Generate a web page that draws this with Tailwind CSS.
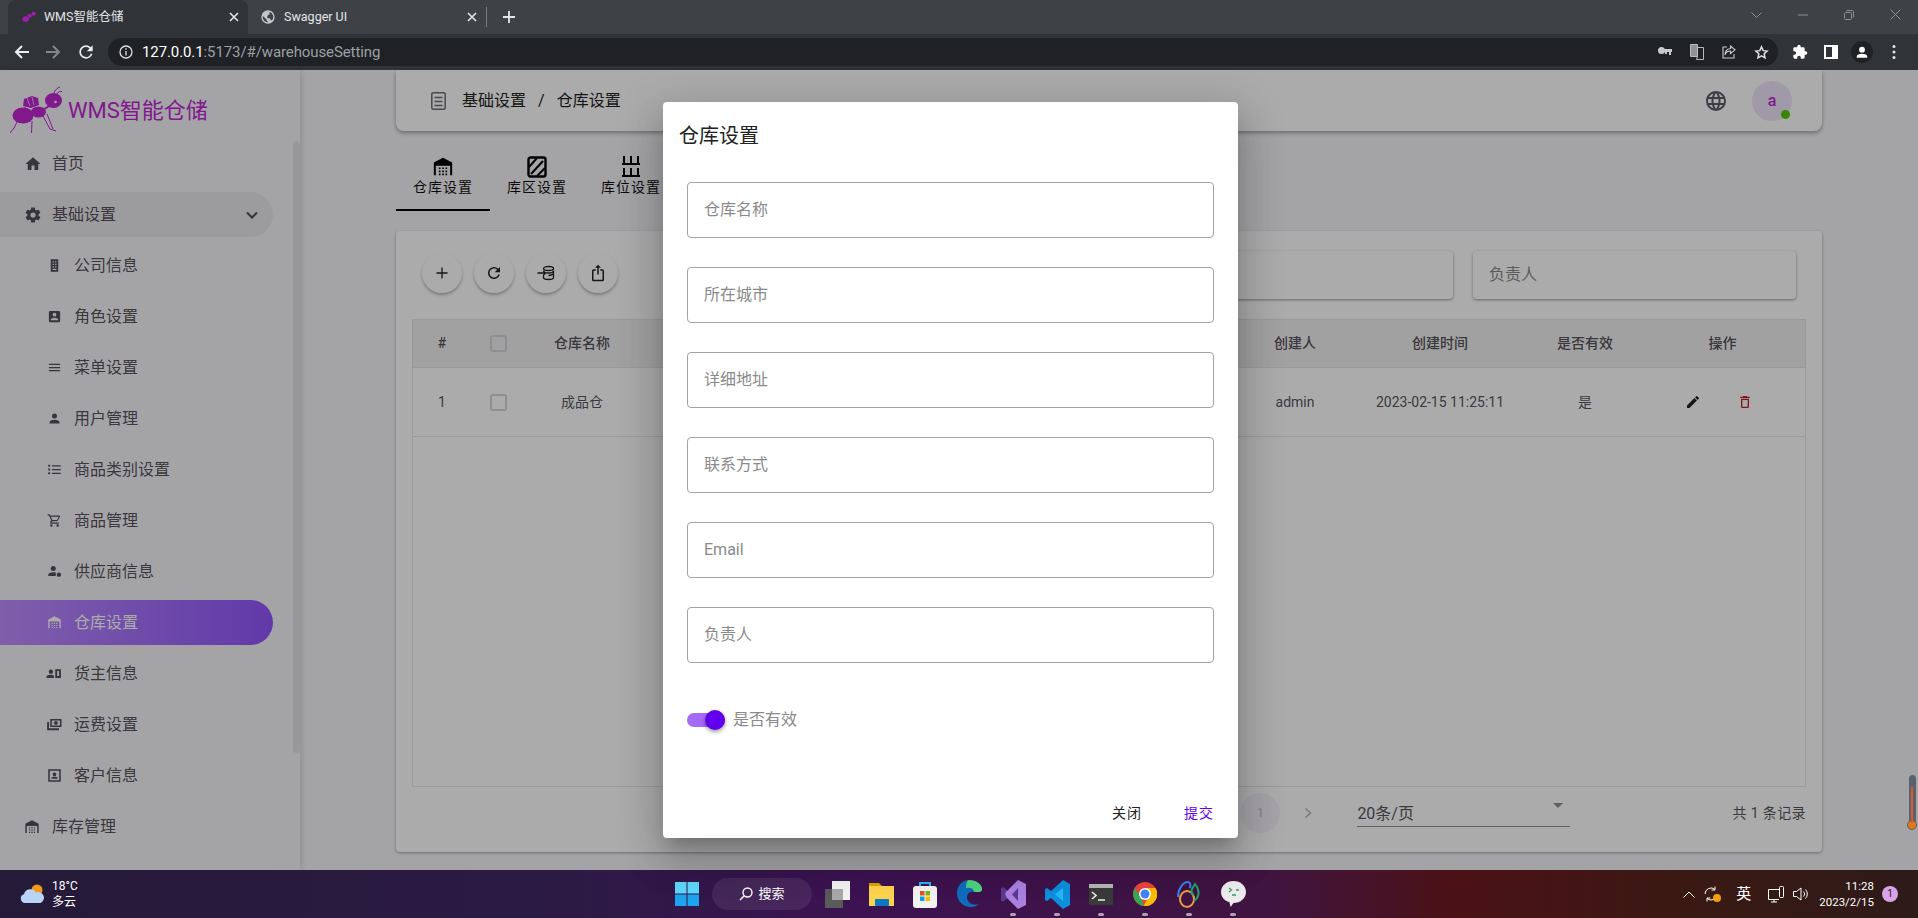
<!DOCTYPE html>
<html lang="zh-CN">
<head>
<meta charset="UTF-8">
<title>WMS智能仓储</title>
<script src="https://cdn.jsdelivr.net/npm/@tailwindcss/browser@4"></script>
</head>
<body class="overflow-hidden bg-[#f5f5f9]">
<svg class="hidden">
  <symbol id="wh" viewBox="0 0 24 24"><path d="M12 2 2 7v14h2.200V10.500h15.600V21H22V7z"/><path d="M7.500 12.500h1.800v1.800H7.500zm3.600 0h1.800v1.800h-1.800zm3.600 0h1.800v1.800h-1.800zM7.500 15.800h1.800v1.800H7.500zm3.600 0h1.800v1.800h-1.800zm3.600 0h1.800v1.800h-1.800zM7.500 19.100h1.800v1.800H7.500zm3.600 0h1.800v1.800h-1.800zm3.600 0h1.800v1.800h-1.800z"/></symbol>
</svg>
<div class="relative w-[1918px] h-[918px] overflow-hidden flex flex-col font-[Roboto,'Noto_Sans_CJK_SC',sans-serif]">

  <!-- browser tabs -->
  <div class="h-[34px] bg-[#3e4246] flex items-end pl-[8px] text-[12.5px] text-[#e4e6e8] shrink-0">
    <div class="w-[240px] h-[34px] bg-[#303337] rounded-t-[8px] flex items-center pl-[13px] pr-[9px]">
      <svg class="w-[16px] h-[16px] mr-[7px]" viewBox="0 0 24 24" fill="#a21caf"><ellipse cx="7" cy="15" rx="5" ry="4"/><ellipse cx="13" cy="10" rx="3" ry="3"/><circle cx="19" cy="7" r="3"/></svg>
      <span class="flex-1">WMS智能仓储</span>
      <svg class="w-[10px] h-[10px]" viewBox="0 0 10 10" stroke="#e4e6e8" stroke-width="1.6"><path d="M1 1l8 8M9 1l-8 8"/></svg>
    </div>
    <div class="w-[238px] h-[34px] flex items-center pl-[12px] pr-[9px]">
      <svg class="w-[16px] h-[16px] mr-[8px]" viewBox="0 0 24 24" fill="#c4c7c9"><path d="M12 2a10 10 0 1 0 0 20 10 10 0 0 0 0-20zM4 12l1-1 5 5v1l2 3a8 8 0 0 1-8-8zm14 5h-2l-1-3h-4v-3l1-2h2V6l1-1.500A8 8 0 0 1 18 17z"/></svg>
      <span class="flex-1">Swagger UI</span>
      <svg class="w-[10px] h-[10px]" viewBox="0 0 10 10" stroke="#e4e6e8" stroke-width="1.6"><path d="M1 1l8 8M9 1l-8 8"/></svg>
    </div>
    <div class="w-px h-[20px] bg-[#7a7d80] mb-[7px]"></div>
    <svg class="w-[14px] h-[14px] ml-[15px] mb-[10px]" viewBox="0 0 14 14" stroke="#e4e6e8" stroke-width="1.8"><path d="M7 1v12M1 7h12"/></svg>
    <div class="flex-1"></div>
    <div class="flex items-center gap-[36px] pr-[17px] mb-[14px]">
      <svg class="w-[11px] h-[6px]" viewBox="0 0 11 6" fill="none" stroke="#8d9093"><path d="M.5.500l5 5 5-5"/></svg>
      <svg class="w-[10px] h-[2px]" viewBox="0 0 10 2" stroke="#8d9093"><path d="M0 1h10"/></svg>
      <svg class="w-[10px] h-[10px]" viewBox="0 0 10 10" fill="none" stroke="#8d9093"><rect x=".5" y="2.500" width="7" height="7" rx="1"/><path d="M2.500.500h6a1 1 0 0 1 1 1v6"/></svg>
      <svg class="w-[11px] h-[11px]" viewBox="0 0 11 11" stroke="#8d9093"><path d="M.5.500l10 10M10.500.500l-10 10"/></svg>
    </div>
  </div>

  <!-- address bar -->
  <div class="h-[36px] bg-[#303337] flex items-center shrink-0 text-[#e4e6e8]">
    <div class="flex items-center gap-[15px] pl-[14px] w-[108px]">
      <svg class="w-[16px] h-[16px]" viewBox="0 0 16 16" fill="none" stroke="#eceef0" stroke-width="2"><path d="M15 8H2M8 2 2 8l6 6"/></svg>
      <svg class="w-[16px] h-[16px]" viewBox="0 0 16 16" fill="none" stroke="#85888b" stroke-width="2"><path d="M1 8h13M8 2l6 6-6 6"/></svg>
      <svg class="w-[20px] h-[20px]" viewBox="0 0 24 24" fill="#eceef0"><path d="M17.650 6.350A7.958 7.958 0 0 0 12 4a8 8 0 1 0 7.730 10h-2.080A5.990 5.990 0 0 1 12 18a6 6 0 0 1 0-12c1.660 0 3.140.690 4.220 1.780L13 11h7V4z"/></svg>
    </div>
    <div class="w-[1670px] h-[28px] bg-[#202124] rounded-full flex items-center pl-[11px] pr-[9px]">
      <svg class="w-[14px] h-[14px] mr-[9px]" viewBox="0 0 14 14" fill="none" stroke="#dfe1e3" stroke-width="1.300"><circle cx="7" cy="7" r="6"/><path d="M7 6v4.500M7 3.300v1.400"/></svg>
      <span class="text-[15px] tracking-[-0.1px] text-white">127.0.0.1<span class="text-[#9aa0a6]">:5173/#/warehouseSetting</span></span>
      <div class="flex-1"></div>
      <div class="flex items-center gap-[18px]">
        <svg class="w-[14px] h-[10px]" viewBox="0 0 14 10" fill="#c7cacc"><path d="M3.500 0a3.500 3.500 0 1 1 0 7 3.500 3.500 0 0 1 0-7zM6 2h8v3h-1v3h-2V5H9v2H7V5H6z"/></svg>
        <svg class="w-[14px] h-[16px]" viewBox="0 0 14 16" fill="none" stroke="#b9bcbf"><path fill="#8f9295" d="M.5.500h7v12h-7z"/><path d="M7.500 3.500h6v12h-7l1-3"/></svg>
        <svg class="w-[14px] h-[14px]" viewBox="0 0 14 14" fill="none" stroke="#c7cacc" stroke-width="1.100"><path d="M5 2H1v11h11V9M8.500 1 13 4.800 8.500 8.500V6C5 6 3.500 8 3 10c0-4 2-6.200 5.500-6.500z"/></svg>
        <svg class="w-[15px] h-[15px]" viewBox="0 0 24 24" fill="none" stroke="#dfe1e3" stroke-width="2.400"><path d="m12 3 2.700 6 6.300.7-4.700 4.300 1.300 6.500L12 17.200 6.400 20.500 7.700 14 3 9.700 9.300 9z"/></svg>
      </div>
    </div>
    <div class="flex items-center gap-[16px] pl-[14px]">
      <svg class="w-[16px] h-[16px]" viewBox="0 0 24 24" fill="#fff"><path d="M20.500 11H19V7a2 2 0 0 0-2-2h-4V3.500a2.500 2.500 0 0 0-5 0V5H4a2 2 0 0 0-2 2v3.800h1.500a2.700 2.700 0 0 1 0 5.400H2V20a2 2 0 0 0 2 2h3.800v-1.500a2.700 2.700 0 0 1 5.400 0V22H17a2 2 0 0 0 2-2v-4h1.500a2.500 2.500 0 0 0 0-5z"/></svg>
      <div class="w-[14px] h-[14px] border-[2px] border-white border-r-[6px]"></div>
      <div class="w-[22px] h-[22px] rounded-full bg-[#202124] flex items-center justify-center -mx-[3px]">
        <svg class="w-[14px] h-[14px]" viewBox="0 0 24 24" fill="#fff"><path d="M12 3a5 5 0 1 1 0 10 5 5 0 0 1 0-10zm0 12c5 0 9 2 9 4.500V22H3v-2.500C3 17 7 15 12 15z"/></svg>
      </div>
      <svg class="w-[16px] h-[16px]" viewBox="0 0 16 16" fill="#e4e6e8"><circle cx="8" cy="2.500" r="1.500"/><circle cx="8" cy="8" r="1.500"/><circle cx="8" cy="13.500" r="1.500"/></svg>
    </div>
  </div>

  <!-- page -->
  <div class="relative flex-1 flex min-h-0 text-[#3a3541]/87">

    <aside class="relative w-[300px] shrink-0 shadow-[2px_0_6px_rgba(0,0,0,0.12)]">
      <div class="h-[71px] flex items-end pl-[10px] pb-[6px]">
        <svg class="w-[54px] h-[50px] mr-[4px]" viewBox="0 0 54 50" fill="#c026d3" stroke="#c026d3">
          <ellipse cx="13" cy="30.500" rx="10.500" ry="8" stroke="none"/>
          <ellipse cx="28.500" cy="27" rx="7.500" ry="5.500" stroke="none"/>
          <path stroke="none" d="M14 14l8-3 6 2 1 7-8 3-8-2z"/>
          <path stroke="#f5f5f9" stroke-width=".7" fill="none" d="M17 13l3 8M22 12l2 8"/>
          <ellipse cx="43.500" cy="15.500" rx="8.500" ry="7.500" stroke="none"/>
          <circle cx="45.500" cy="17" r="1.300" fill="#f5f5f9" stroke="none"/>
          <path fill="none" stroke-width="2" d="M33 25l6-4"/>
          <path fill="none" stroke-width="1" d="M44 8c1-3 3-5 6-6M47 9c1-2 3-3 5-2.500M7 37 4 43 0 48M22 36l-.5 12M33 31l7 13 6 2M37 29l6 15M15 22 13 30"/>
        </svg>
        <span class="text-[22px] leading-[30px] mb-[9px] text-[#c026d3]">WMS智能仓储</span>
      </div>
      <nav class="w-[273px]">
        <a class="flex items-center h-[45px] mb-[6px] pl-[24px]"><svg class="w-[18px] h-[18px] mr-[10px]" viewBox="0 0 24 24" fill="currentColor"><path d="M10 20v-6h4v6h5v-8h3L12 3 2 12h3v8z"/></svg>首页</a>
        <a class="flex items-center h-[45px] mb-[6px] pl-[24px] pr-[15px] bg-[#e9e9ee] rounded-r-full"><svg class="w-[18px] h-[18px] mr-[10px]" viewBox="0 0 24 24" fill="currentColor"><path d="M12 15.500A3.500 3.500 0 0 1 8.500 12 3.500 3.500 0 0 1 12 8.500a3.500 3.500 0 0 1 3.500 3.500 3.500 3.500 0 0 1-3.500 3.500m7.430-2.530c.04-.32.07-.64.07-.97 0-.33-.03-.66-.07-1l2.110-1.630c.19-.15.24-.42.12-.64l-2-3.460c-.12-.22-.39-.31-.61-.22l-2.490 1c-.52-.39-1.060-.73-1.690-.98l-.37-2.650A.506.506 0 0 0 14 2h-4c-.25 0-.46.18-.5.42l-.37 2.650c-.63.25-1.170.59-1.690.98l-2.490-1c-.22-.09-.49 0-.61.22l-2 3.460c-.13.22-.07.49.12.64L4.570 11c-.04.34-.07.67-.07 1 0 .33.03.65.07.97l-2.110 1.660c-.19.15-.25.42-.12.64l2 3.460c.12.22.39.3.61.22l2.490-1.010c.52.4 1.060.74 1.690.99l.37 2.650c.04.24.25.42.5.42h4c.25 0 .46-.18.5-.42l.37-2.650c.63-.26 1.170-.59 1.690-.99l2.490 1.010c.22.08.49 0 .61-.22l2-3.460c.12-.22.07-.49-.12-.64z"/></svg><span class="flex-1">基础设置</span><svg class="w-[12px] h-[8px]" viewBox="0 0 12 8" fill="none" stroke="currentColor" stroke-width="2"><path d="m1 1.500 5 5 5-5"/></svg></a>

        <a class="flex items-center h-[45px] mb-[6px] pl-[47px]"><svg class="w-[15px] h-[15px] mr-[12px]" viewBox="0 0 24 24" fill="currentColor"><path d="M6 2h12v20H6zm3 3v2h2V5zm4 0v2h2V5zm-4 4v2h2V9zm4 0v2h2V9zm-4 4v2h2v-2zm4 0v2h2v-2zm-4 4v2h6v-2z" fill-rule="evenodd"/></svg>公司信息</a>
        <a class="flex items-center h-[45px] mb-[6px] pl-[47px]"><svg class="w-[15px] h-[15px] mr-[12px]" viewBox="0 0 24 24" fill="currentColor"><path d="M6 17c0-2 4-3.100 6-3.100s6 1.100 6 3.100v1H6m9-9a3 3 0 0 1-3 3 3 3 0 0 1-3-3 3 3 0 0 1 3-3 3 3 0 0 1 3 3M3 5v14a2 2 0 0 0 2 2h14a2 2 0 0 0 2-2V5a2 2 0 0 0-2-2H5a2 2 0 0 0-2 2z"/></svg>角色设置</a>
        <a class="flex items-center h-[45px] mb-[6px] pl-[47px]"><svg class="w-[15px] h-[15px] mr-[12px]" viewBox="0 0 24 24" fill="currentColor"><path d="M3 6h18v2H3zm0 5h18v2H3zm0 5h18v2H3z"/></svg>菜单设置</a>
        <a class="flex items-center h-[45px] mb-[6px] pl-[47px]"><svg class="w-[15px] h-[15px] mr-[12px]" viewBox="0 0 24 24" fill="currentColor"><path d="M12 4a4 4 0 0 1 4 4 4 4 0 0 1-4 4 4 4 0 0 1-4-4 4 4 0 0 1 4-4m0 10c4.420 0 8 1.790 8 4v2H4v-2c0-2.210 3.580-4 8-4z"/></svg>用户管理</a>
        <a class="flex items-center h-[45px] mb-[6px] pl-[47px]"><svg class="w-[15px] h-[15px] mr-[12px]" viewBox="0 0 24 24" fill="currentColor"><path d="M8 5h14v2H8zm0 6h14v2H8zm0 6h14v2H8zM2 4.500h3v3H2zm0 6h3v3H2zm0 6h3v3H2z"/></svg>商品类别设置</a>
        <a class="flex items-center h-[45px] mb-[6px] pl-[47px]"><svg class="w-[15px] h-[15px] mr-[12px]" viewBox="0 0 24 24" fill="currentColor"><path d="M17 18a2 2 0 1 1 0 4 2 2 0 0 1 0-4M1 2h3.270l.94 2H20a1 1 0 0 1 1 1c0 .17-.05.34-.12.5l-3.580 6.470c-.34.61-1 1.030-1.750 1.030H8.100l-.9 1.630-.03.12a.25.25 0 0 0 .25.25H19v2H7a2 2 0 0 1-2-2c0-.35.09-.68.24-.96l1.360-2.450L3 4H1zm6 16a2 2 0 1 1 0 4 2 2 0 0 1 0-4m9-7 2.780-5H6.140l2.360 5z"/></svg>商品管理</a>
        <a class="flex items-center h-[45px] mb-[6px] pl-[47px]"><svg class="w-[15px] h-[15px] mr-[12px]" viewBox="0 0 24 24" fill="currentColor"><circle cx="10" cy="7" r="4"/><path d="M2 19v-2c0-2.500 4-4 8-4 1.500 0 3 .2 4 .6V19z"/><circle cx="19" cy="17" r="3.500"/></svg>供应商信息</a>
        <a class="flex items-center h-[45px] mb-[6px] pl-[47px] rounded-r-full text-white bg-linear-to-r from-[#c08cfe] to-[#9155fd]"><svg class="w-[15px] h-[15px] mr-[12px]" fill="currentColor"><use href="#wh"/></svg>仓库设置</a>
        <a class="flex items-center h-[45px] mb-[6px] pl-[46px]"><svg class="w-[16px] h-[15px] mr-[12px]" viewBox="0 0 24 24" fill="currentColor"><circle cx="7" cy="9" r="3.500"/><path d="M0 19v-2c0-2 4-3 7-3s5 1 5 3v2zM14 5h9v14h-9zm3 3v8h3V8z" fill-rule="evenodd"/></svg>货主信息</a>
        <a class="flex items-center h-[45px] mb-[6px] pl-[46px]"><svg class="w-[16px] h-[15px] mr-[12px]" viewBox="0 0 24 24" fill="currentColor"><path d="M6 3h18v13H6zm2.500 2.500v8h13v-8zM15 6.500a3 3 0 1 1 0 6 3 3 0 0 1 0-6zM1 8h3v10h16v3H1z" fill-rule="evenodd"/></svg>运费设置</a>
        <a class="flex items-center h-[45px] mb-[6px] pl-[47px]"><svg class="w-[15px] h-[15px] mr-[12px]" viewBox="0 0 24 24" fill="currentColor"><path d="M2 2h20v20H2zm2.500 2.500v15h15v-15zM12 7a3 3 0 1 1 0 6 3 3 0 0 1 0-6zm-5 9c0-1.500 3-2.200 5-2.200s5 .7 5 2.200v1H7z" fill-rule="evenodd"/></svg>客户信息</a>
        <a class="flex items-center h-[45px] pl-[24px]"><svg class="w-[16px] h-[16px] mr-[12px]" fill="currentColor"><use href="#wh"/></svg>库存管理</a>
      </nav>
      <div class="absolute right-0 top-[71px] w-[7px] h-[612px] rounded-full bg-black/7"></div>
    </aside>

    <main class="flex-1 pl-[96px] pr-[96px] pb-[18px] flex flex-col min-w-0">
      <header class="h-[61px] shrink-0 bg-white rounded-b-[8px] shadow-[0_2px_4px_rgba(0,0,0,0.35)] flex items-center pl-[35px] pr-[30px]">
        <svg class="w-[15px] h-[18px] mr-[16px]" viewBox="0 0 15 18" fill="none" stroke="#6f6b76" stroke-width="1.500"><rect x=".8" y=".8" width="13.400" height="16.400" rx="1.500"/><path d="M3.500 5.500h8M3.500 9.500h8M3.500 13.500h8"/></svg>
        <span class="text-[#222]">基础设置</span><span class="mx-[12px] text-[#222]">/</span><span class="text-[#222]">仓库设置</span>
        <div class="flex-1"></div>
        <svg class="w-[24px] h-[24px] mr-[24px]" viewBox="0 0 24 24" fill="#5f5b66"><path d="M16.360 14c.08-.66.14-1.320.14-2 0-.68-.06-1.340-.14-2h3.380c.16.64.26 1.310.26 2s-.1 1.360-.26 2m-5.150 5.560c.6-1.110 1.060-2.310 1.380-3.560h2.950a8.030 8.030 0 0 1-4.330 3.560M14.340 14H9.660c-.1-.66-.16-1.320-.16-2 0-.68.06-1.350.16-2h4.680c.09.65.16 1.320.16 2 0 .68-.07 1.340-.16 2M12 19.960c-.83-1.200-1.500-2.530-1.910-3.960h3.820c-.41 1.430-1.080 2.760-1.910 3.960M8 8H5.080A7.923 7.923 0 0 1 9.400 4.440C8.800 5.550 8.350 6.750 8 8m-2.920 8H8c.35 1.250.8 2.450 1.400 3.560A8.008 8.008 0 0 1 5.080 16m-.82-2C4.100 13.360 4 12.690 4 12s.1-1.360.26-2h3.380c-.08.66-.14 1.320-.14 2 0 .68.06 1.340.14 2M12 4.030c.83 1.200 1.500 2.540 1.910 3.970h-3.820c.41-1.430 1.080-2.770 1.910-3.970M18.920 8h-2.950a15.650 15.650 0 0 0-1.380-3.560c1.840.63 3.370 1.900 4.330 3.560M12 2C6.470 2 2 6.500 2 12a10 10 0 0 0 10 10 10 10 0 0 0 10-10A10 10 0 0 0 12 2z"/></svg>
        <div class="relative w-[40px] h-[40px] rounded-full bg-[#eee5fb] flex items-center justify-center font-medium text-[#c026d3]">a<span class="absolute right-[2px] bottom-[2px] w-[9px] h-[9px] rounded-full bg-[#56ca00]"></span></div>
      </header>

      <div class="h-[100px] shrink-0 pt-[20px] flex text-[14px] tracking-[1px] text-[#111]">
        <div class="w-[94px] h-[60px] border-b-2 border-black flex flex-col items-center pt-[5px]"><svg class="w-[22px] h-[22px]" fill="#000"><use href="#wh"/></svg><span class="leading-[18px]">仓库设置</span></div>
        <div class="w-[94px] h-[60px] flex flex-col items-center pt-[5px]"><svg class="w-[22px] h-[22px]" viewBox="0 0 22 22" fill="none" stroke="#000"><rect x="2.500" y="1.500" width="17" height="19" rx="2" stroke-width="2.400"/><path stroke-width="2" d="M3 11 11 2M5 18 17 5M11 20l8-8"/></svg><span class="leading-[18px]">库区设置</span></div>
        <div class="w-[94px] h-[60px] flex flex-col items-center pt-[5px]"><svg class="w-[22px] h-[22px]" viewBox="0 0 22 22" fill="#000"><path d="M3 0h2v7H3zm7 0h2v7h-2zm7 0h2v7h-2zM2 7h18v2H2zM3 12h2v7H3zm7 0h2v7h-2zm7 0h2v7h-2zM2 19h18v2H2z"/></svg><span class="leading-[18px]">库位设置</span></div>
      </div>

      <section class="flex-1 bg-white rounded-[4px] shadow-[0_1px_3px_rgba(0,0,0,0.35)] px-[16px] flex flex-col min-h-0">
        <div class="h-[88px] shrink-0 flex items-start pt-[20px]">
          <div class="flex gap-[12px] pl-[10px] pt-[2px]">
            <button class="w-[40px] h-[40px] rounded-full bg-white shadow-[0_2px_3px_rgba(0,0,0,0.28)] flex items-center justify-center"><svg class="w-[18px] h-[18px]" viewBox="0 0 18 18" stroke="#222" stroke-width="1.300"><path d="M9 3.500v11M3.500 9h11"/></svg></button>
            <button class="w-[40px] h-[40px] rounded-full bg-white shadow-[0_2px_3px_rgba(0,0,0,0.28)] flex items-center justify-center"><svg class="w-[18px] h-[18px]" viewBox="0 0 24 24" fill="#222"><path d="M17.650 6.350A7.958 7.958 0 0 0 12 4a8 8 0 1 0 7.730 10h-2.080A5.990 5.990 0 0 1 12 18a6 6 0 0 1 0-12c1.660 0 3.140.690 4.220 1.780L13 11h7V4z"/></svg></button>
            <button class="w-[40px] h-[40px] rounded-full bg-white shadow-[0_2px_3px_rgba(0,0,0,0.28)] flex items-center justify-center"><svg class="w-[18px] h-[18px]" viewBox="0 0 18 18" fill="none" stroke="#222" stroke-width="1.300"><ellipse cx="11.500" cy="4.500" rx="5" ry="2"/><path d="M6.500 6.500c0 1 1.500 2.500 5 2.500s5-1.500 5-2.500v7c0 1-2 2-5 2s-5-1-5-2V11M16.500 9c0 1-2 2.500-5 2.500M.5 9h8M6.500 7l2 2-2 2"/></svg></button>
            <button class="w-[40px] h-[40px] rounded-full bg-white shadow-[0_2px_3px_rgba(0,0,0,0.28)] flex items-center justify-center"><svg class="w-[18px] h-[18px]" viewBox="0 0 24 24" fill="#222"><path d="M12 1 8 5h3v9h2V5h3m2 18H6a2 2 0 0 1-2-2V9a2 2 0 0 1 2-2h3v2H6v12h12V9h-3V7h3a2 2 0 0 1 2 2v12a2 2 0 0 1-2 2z"/></svg></button>
          </div>
          <div class="flex-1"></div>
          <div class="flex gap-[20px] pr-[10px]">
            <div class="w-[323px] h-[48px] rounded-[4px] bg-white shadow-[0_1px_3px_rgba(0,0,0,0.4)]"></div>
            <div class="w-[323px] h-[48px] rounded-[4px] bg-white shadow-[0_1px_3px_rgba(0,0,0,0.4)] flex items-center pl-[16px] text-[#8a8a8a]">负责人</div>
          </div>
        </div>

        <div class="h-[468px] shrink-0 border border-[#e6e6e6] text-[14px]">
          <div class="h-[48px] bg-[#f0f0f0] border-b border-[#e6e6e6] grid grid-cols-[58px_54px_114px_1fr_110px_180px_110px_165px] items-center text-center font-medium">
            <span>#</span>
            <span class="mx-auto w-[17px] h-[17px] rounded-[3px] border-2 border-[#d5d5dc]"></span>
            <span>仓库名称</span><span></span>
            <span>创建人</span><span>创建时间</span><span>是否有效</span><span>操作</span>
          </div>
          <div class="h-[69px] border-b border-[#e6e6e6] grid grid-cols-[58px_54px_114px_1fr_110px_180px_110px_165px] items-center text-center">
            <span>1</span>
            <span class="mx-auto w-[17px] h-[17px] rounded-[3px] border-2 border-[#d5d5dc]"></span>
            <span>成品仓</span><span></span>
            <span>admin</span><span class="whitespace-nowrap">2023-02-15 11:25:11</span><span>是</span>
            <span class="flex justify-center gap-[36px] pr-[8px]">
              <svg class="w-[16px] h-[16px]" viewBox="0 0 24 24" fill="#222"><path d="M20.710 7.040c.39-.39.39-1.040 0-1.410l-2.340-2.340c-.37-.39-1.020-.39-1.410 0l-1.840 1.830 3.750 3.750M3 17.250V21h3.750L17.810 9.930l-3.750-3.750z"/></svg>
              <svg class="w-[16px] h-[16px]" viewBox="0 0 24 24" fill="#c81e2e"><path d="M6 19a2 2 0 0 0 2 2h8a2 2 0 0 0 2-2V7H6zM8 9h8v10H8zm7.500-5-1-1h-5l-1 1H5v2h14V4z"/></svg>
            </span>
          </div>
        </div>

        <div class="h-[65px] shrink-0 flex items-center justify-end">
          <div class="w-[40px] h-[40px] rounded-full bg-[#f6f4f9] flex items-center justify-center text-[13px] text-[#c9b8d9] mb-[13px] mr-[24px]">1</div>
          <svg class="w-[8px] h-[12px] mr-[45px] mb-[13px]" viewBox="0 0 8 12" fill="none" stroke="#b5b5b5" stroke-width="1.500"><path d="m1.500 1.500 5 4.500-5 4.500"/></svg>
          <div class="relative w-[213px] h-[29px] mb-[14px] border-b border-[#8f8f8f] pt-[4px] mr-[162px]">20条/页<span class="absolute right-[7px] top-[5px] border-x-[5px] border-x-transparent border-t-[5px] border-t-[#8f8f8f]"></span></div>
          <span class="text-[14px] tracking-[0.4px] whitespace-nowrap mb-[13px]">共 1 条记录</span>
        </div>
      </section>
    </main>
  </div>

  <!-- taskbar -->
  <div class="relative h-[48px] shrink-0 flex items-center text-white text-[12px] bg-[linear-gradient(90deg,#251a38_0%,#2c1a45_30%,#3d1252_45%,#3f1440_66%,#4b1215_76%,#3a1913_88%,#2d1a19_100%)]">
    <div class="flex items-center w-[675px] pl-[20px]">
      <svg class="w-[25px] h-[22px] mr-[7px]" viewBox="0 0 25 22"><circle cx="17" cy="7" r="5.500" fill="#f39a1e"/><path d="M5 20a4.500 4.500 0 0 1-1-8.800A6.500 6.500 0 0 1 16 9.500a5.200 5.200 0 0 1 4.500 10.500z" fill="#b9d4f6"/></svg>
      <div class="leading-[16px]"><div>18°C</div><div>多云</div></div>
    </div>
    <div class="flex items-center">
      <svg class="w-[24px] h-[24px] mr-[13px]" viewBox="0 0 24 24" fill="#38bdf8"><path fill="#5fd8fb" d="M0 0h11.500v11.500H0zM12.500 0H24v11.500H12.500z"/><path fill="#1ea3ef" d="M0 12.500h11.500V24H0zM12.500 12.500H24V24H12.500z"/></svg>
      <div class="w-[100px] h-[32px] rounded-full bg-white/8 flex items-center justify-center gap-[5px] text-[13px] mr-[3px]">
        <svg class="w-[14px] h-[14px]" viewBox="0 0 14 14" fill="none" stroke="#fff" stroke-width="1.400"><circle cx="8.500" cy="5.500" r="4.500"/><path d="M5 9 1 13"/></svg>搜索
      </div>
      <div class="w-[44px] h-[48px] flex items-center justify-center"><svg class="w-[25px] h-[27px]" viewBox="0 0 25 27"><rect y="8" width="18" height="19" fill="#5a5a5a"/><rect x="7" width="18" height="19" fill="#f2f2f2"/><rect x="7" y="8" width="11" height="11" fill="#a8a8a8"/></svg></div>
      <div class="w-[44px] h-[48px] flex items-center justify-center"><svg class="w-[25px] h-[24px]" viewBox="0 0 25 24"><path fill="#d9a300" d="M0 1h10l3 3h12v5H0z"/><rect y="4" width="25" height="20" fill="#fcd34d"/><rect x="6" y="17" width="14" height="7" rx="1" fill="#0c78c8"/></svg></div>
      <div class="w-[44px] h-[48px] flex items-center justify-center"><svg class="w-[24px] h-[28px]" viewBox="0 0 24 28"><path fill="none" stroke="#2ab4f0" stroke-width="2" d="M7 7V3h10v4"/><rect y="6" width="24" height="22" rx="3" fill="#f2f2f2"/><rect x="7" y="11" width="4.500" height="4.500" fill="#e8501f"/><rect x="12.500" y="11" width="4.500" height="4.500" fill="#7cb518"/><rect x="7" y="16.500" width="4.500" height="4.500" fill="#07a2ec"/><rect x="12.500" y="16.500" width="4.500" height="4.500" fill="#ffb900"/></svg></div>
      <div class="w-[44px] h-[48px] flex items-center justify-center"><svg class="w-[25px] h-[28px]" viewBox="0 0 25 28"><path fill="#0f6cbd" d="M12 0C5 0 0 6 0 13c0 8 6 14 14 14 3 0 6-1 8-3-6 2-12-1-12-7 0-3 3-6 7-5 4 0 8 1 8-3C25 4 19 0 12 0z"/><path fill="#4ed27d" d="M12 0c7 0 13 4 13 9 0 4-4 3-8 3 0-3-3-5-8-4 0-4 1-8 3-8z"/></svg></div>
      <div class="relative w-[44px] h-[48px] flex items-center justify-center"><svg class="w-[25px] h-[29px]" viewBox="0 0 25 29"><path fill="#a97fe0" d="M17 0 25 4v21l-8 4-11-11-4 3-2-1V9l2-1 4 3z"/><path fill="#5b3a91" d="M0 9v11l2 1 4-3-2-4 2-4-4-3zM17 8l-6 6.500 6 6.500z"/></svg><span class="absolute bottom-[2px] w-[6px] h-[3px] rounded-full bg-white/60"></span></div>
      <div class="relative w-[44px] h-[48px] flex items-center justify-center"><svg class="w-[25px] h-[29px]" viewBox="0 0 25 29"><path fill="#0c8fdc" d="M18 0 25 4v21l-7 4-12-11-4 3-2-1v-11l2-1 4 3z"/><path fill="#29b6f6" d="M18 8v13l-8-6.500z"/></svg><span class="absolute bottom-[2px] w-[6px] h-[3px] rounded-full bg-white/60"></span></div>
      <div class="relative w-[44px] h-[48px] flex items-center justify-center"><svg class="w-[24px] h-[21px]" viewBox="0 0 24 21"><rect width="24" height="21" rx="1" fill="#3a3a3a"/><rect width="24" height="4" fill="#b5b5b5"/><path fill="none" stroke="#eee" stroke-width="1.600" d="m3 8 4 3.500-4 3.500M9 16h7"/></svg><span class="absolute bottom-[2px] w-[6px] h-[3px] rounded-full bg-white/60"></span></div>
      <div class="relative w-[44px] h-[48px] flex items-center justify-center"><svg class="w-[24px] h-[24px]" viewBox="0 0 24 24"><circle cx="12" cy="12" r="12" fill="#e8453c"/><path fill="#fbbc05" d="M12 6h10.500a12 12 0 0 1-12 18L16 14z"/><path fill="#34a853" d="M2 6l6 10 3 8A12 12 0 0 1 2 6z"/><circle cx="12" cy="12" r="6" fill="#fff"/><circle cx="12" cy="12" r="4.500" fill="#4285f4"/></svg><span class="absolute bottom-[2px] w-[6px] h-[3px] rounded-full bg-white/60"></span></div>
      <div class="relative w-[44px] h-[48px] flex items-center justify-center"><svg class="w-[24px] h-[27px]" viewBox="0 0 24 27" fill="none" stroke-width="2"><path stroke="#3b82f6" d="M1 16C1 8 6 1 11 1c2 0 3 3 2 6"/><ellipse cx="10" cy="18" rx="7" ry="8" stroke="#e8a33b"/><path stroke="#22a06b" d="M17 20c4-3 6-8 3-14l-2-3-3 5c-1 3 0 5 2 6"/></svg><span class="absolute bottom-[2px] w-[6px] h-[3px] rounded-full bg-white/60"></span></div>
      <div class="relative w-[44px] h-[48px] flex items-center justify-center"><svg class="w-[25px] h-[26px]" viewBox="0 0 25 26"><path fill="#ececec" d="M12.500 0C19.400 0 25 4.800 25 11s-5.600 11-12.500 11l-3 4-1-4.800C3.500 20 0 16 0 11 0 4.800 5.600 0 12.500 0z"/><path fill="none" stroke="#2fa060" stroke-width="1.300" d="m8 7 2.500 2L8 11M15 9h3M11 14h4"/></svg><span class="absolute bottom-[2px] w-[6px] h-[3px] rounded-full bg-white/60"></span></div>
    </div>
    <div class="flex-1"></div>
    <div class="flex items-center pr-[20px]">
      <svg class="w-[12px] h-[7px] mr-[8px]" viewBox="0 0 12 7" fill="none" stroke="#fff"><path d="m.5 6.500 5.500-5.500 5.500 5.500"/></svg>
      <div class="relative w-[16px] h-[16px] mr-[17px]"><svg class="w-[16px] h-[16px]" viewBox="0 0 16 16" fill="none" stroke="#fff"><path d="M2 8a6 6 0 0 1 10-4.500M14 8a6 6 0 0 1-10 4.500M12 .500v3.500H8.500M4 15.500V12h3.500"/></svg><span class="absolute -right-[2px] bottom-0 w-[8px] h-[8px] rounded-full bg-[#f59e0b]"></span></div>
      <span class="text-[15px] mr-[17px]">英</span>
      <svg class="w-[16px] h-[17px] mr-[9px]" viewBox="0 0 16 17" fill="none" stroke="#fff"><path d="M11 3.500H.5v10H11M3 16h6M6 13.500V16"/><rect x="11.500" y=".5" width="4" height="11" rx="1"/></svg>
      <svg class="w-[16px] h-[14px] mr-[10px]" viewBox="0 0 16 14" fill="none" stroke="#fff"><path d="M.5 4.500h3L8 1v12L3.500 9.500h-3zM10.500 4.500a3.500 3.500 0 0 1 0 5M12.500 2.500a6.500 6.500 0 0 1 0 9"/></svg>
      <div class="text-right text-[11.500px] leading-[16px] whitespace-nowrap mr-[8px]"><div>11:28</div><div>2023/2/15</div></div>
      <span class="w-[16px] h-[16px] rounded-full bg-[#d8a3e8] text-[#3a1a3a] flex items-center justify-center text-[11px]">1</span>
    </div>
  </div>

  <!-- dialog overlay -->
  <div class="absolute left-0 right-0 top-[70px] h-[800px] bg-black/33"></div>

  <div class="absolute left-[663px] top-[102px] w-[575px] h-[736px] bg-white rounded-[4px] shadow-[0_11px_15px_-7px_rgba(0,0,0,0.2),0_24px_38px_3px_rgba(0,0,0,0.14),0_9px_46px_8px_rgba(0,0,0,0.12)] flex flex-col">
    <h2 class="h-[68px] shrink-0 flex items-center pl-[16px] text-[20px] text-[#222]">仓库设置</h2>
    <div class="pt-[12px] px-[24px] flex flex-col gap-[29px] text-[#8a8a8a]">
      <label class="h-[56px] border border-[#a3a3a3] rounded-[4px] flex items-center pl-[16px]">仓库名称</label>
      <label class="h-[56px] border border-[#a3a3a3] rounded-[4px] flex items-center pl-[16px]">所在城市</label>
      <label class="h-[56px] border border-[#a3a3a3] rounded-[4px] flex items-center pl-[16px]">详细地址</label>
      <label class="h-[56px] border border-[#a3a3a3] rounded-[4px] flex items-center pl-[16px]">联系方式</label>
      <label class="h-[56px] border border-[#a3a3a3] rounded-[4px] flex items-center pl-[16px]">Email</label>
      <label class="h-[56px] border border-[#a3a3a3] rounded-[4px] flex items-center pl-[16px]">负责人</label>
    </div>
    <div class="mt-[47px] ml-[24px] h-[20px] flex items-center text-[#8a8a8a]">
      <div class="relative w-[38px] h-[14px] rounded-full bg-[#a56bf5]"><span class="absolute right-0 -top-[3px] w-[20px] h-[20px] rounded-full bg-[#6200ee] shadow-[0_2px_4px_rgba(0,0,0,0.4)]"></span></div>
      <span class="ml-[8px]">是否有效</span>
    </div>
    <div class="mt-auto h-[50px] flex items-start justify-end gap-[42px] pr-[24px] text-[14px] tracking-[1px]">
      <button class="text-[#222] leading-[50px]">关闭</button>
      <button class="text-[#6200ee] leading-[50px]">提交</button>
    </div>
  </div>

  <!-- desktop temperature widget -->
  <div class="absolute left-[1907px] top-[775px] w-[10px] h-[56px]">
    <div class="mx-auto w-[7px] h-[48px] rounded-t-full bg-[#56626e] flex justify-center pt-[12px]"><div class="w-[2px] h-full bg-[#e0552a]"></div></div>
    <div class="-mt-[3px] mx-auto w-[10px] h-[10px] rounded-full bg-[#e07b10] border border-[#56626e]"></div>
  </div>
</div>
</body>
</html>
